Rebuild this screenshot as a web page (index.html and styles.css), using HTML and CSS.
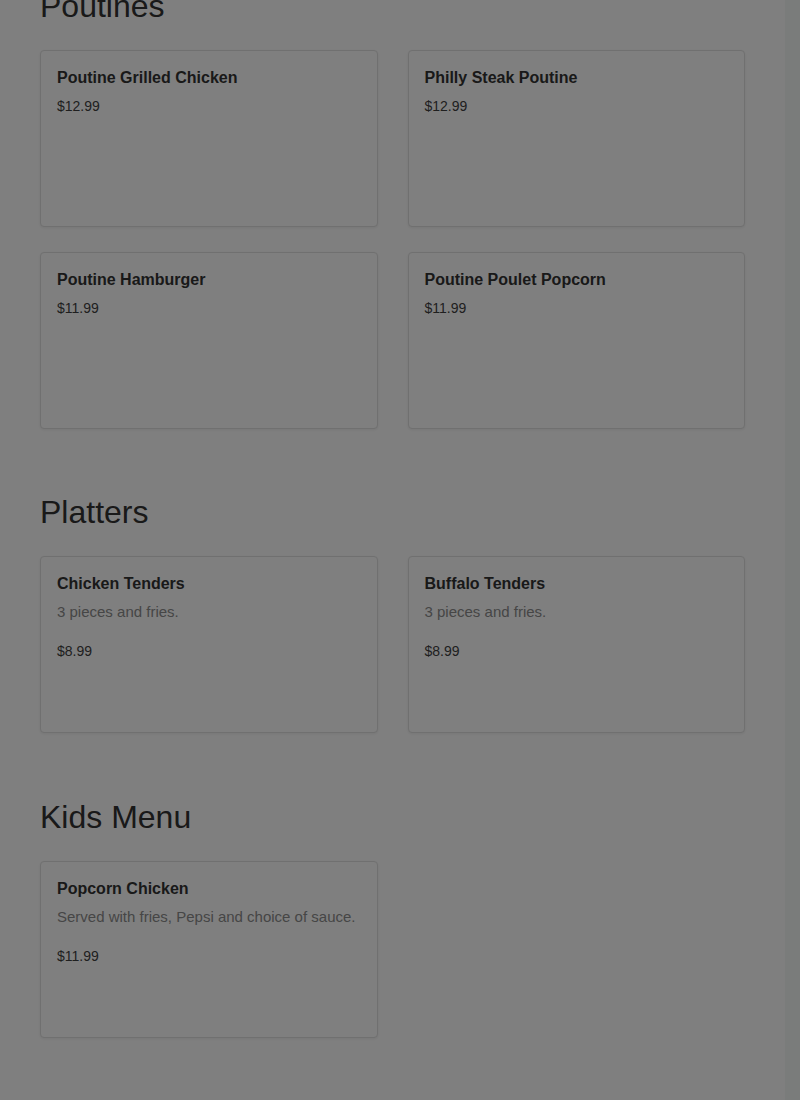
FILE: index.html
```html
<!DOCTYPE html>
<html lang="en">
<head>
<meta charset="utf-8">
<title>Menu</title>
<link rel="stylesheet" href="styles.css">
</head>
<body>
<main class="page">
  <section class="menu-section">
    <h2 class="section-title">Poutines</h2>
    <div class="grid">
      <div class="card"><h3 class="item-name">Poutine Grilled Chicken</h3><p class="item-price">$12.99</p></div>
      <div class="card"><h3 class="item-name">Philly Steak Poutine</h3><p class="item-price">$12.99</p></div>
      <div class="card"><h3 class="item-name">Poutine Hamburger</h3><p class="item-price">$11.99</p></div>
      <div class="card"><h3 class="item-name">Poutine Poulet Popcorn</h3><p class="item-price">$11.99</p></div>
    </div>
  </section>
  <section class="menu-section">
    <h2 class="section-title">Platters</h2>
    <div class="grid">
      <div class="card"><h3 class="item-name">Chicken Tenders</h3><p class="item-desc">3 pieces and fries.</p><p class="item-price">$8.99</p></div>
      <div class="card"><h3 class="item-name">Buffalo Tenders</h3><p class="item-desc">3 pieces and fries.</p><p class="item-price">$8.99</p></div>
    </div>
  </section>
  <section class="menu-section">
    <h2 class="section-title">Kids Menu</h2>
    <div class="grid">
      <div class="card"><h3 class="item-name">Popcorn Chicken</h3><p class="item-desc">Served with fries, Pepsi and choice of sauce.</p><p class="item-price">$11.99</p></div>
    </div>
  </section>
</main>
<div class="backdrop"></div>
<div class="scrollbar"></div>
</body>
</html>
```

FILE: styles.css
```css
html, body {
  margin: 0;
  padding: 0;
  background: #ffffff;
  font-family: "Liberation Sans", Arial, sans-serif;
  overflow: hidden;
}

.page {
  width: 785px;
  box-sizing: border-box;
  padding: 0 40px;
  margin-top: -13px;
}

.menu-section {
  margin-bottom: 65px;
}

.menu-section:first-child {
  margin-bottom: 64px;
}

.section-title {
  margin: 0 0 25px;
  font-size: 32px;
  line-height: 38px;
  font-weight: 400;
  color: #333333;
}

.grid {
  display: grid;
  grid-template-columns: 1fr 1fr;
  column-gap: 30px;
  row-gap: 25px;
}

.card {
  box-sizing: border-box;
  height: 177px;
  padding: 17px 16px 16px;
  border: 1px solid #e0e0e0;
  border-radius: 4px;
  background: #ffffff;
  box-shadow: 0 1px 3px rgba(0, 0, 0, 0.07);
}

.item-name {
  margin: 0;
  font-size: 16px;
  line-height: 20px;
  font-weight: 700;
  color: #333333;
}

.item-desc {
  margin: 7px 0 18px;
  font-size: 15px;
  line-height: 22px;
  color: #8c8c8c;
}

.item-price {
  margin: 8px 0 0;
  font-size: 14px;
  line-height: 20px;
  color: #3e3e3e;
}

.backdrop {
  position: fixed;
  inset: 0;
  background: rgba(0, 0, 0, 0.5);
}

.scrollbar {
  position: fixed;
  top: 0;
  right: 0;
  bottom: 0;
  width: 15px;
  background: #7a7c7b;
}
```
